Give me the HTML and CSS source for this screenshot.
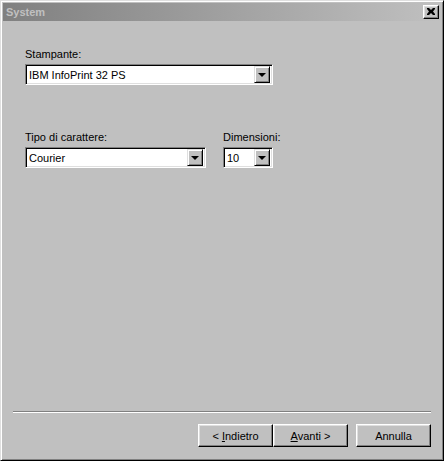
FILE: index.html
```html
<!DOCTYPE html>
<html lang="it">
<head>
  <meta charset="UTF-8" />
  <title>System</title>
  <link rel="stylesheet" href="styles.css">
</head>
<body>
  <div class="window">
    <div class="titlebar">
      <span class="title">System</span>
      <button class="close" title="Chiudi">
        <svg width="8" height="7" viewBox="0 0 8 7"><path d="M0 0h2l2 2 2-2h2v1l-2 2.5 2 2.5v1h-2l-2-2-2 2h-2v-1l2-2.5-2-2.5z" fill="#000"/></svg>
      </button>
    </div>

    <div class="main">
      <div class="field">
        <label>Stampante:</label>
        <div class="combo wide">
          <span class="value">IBM InfoPrint 32 PS</span>
          <span class="drop"><i class="arrow"></i></span>
        </div>
      </div>

      <div class="row">
        <div class="field">
          <label>Tipo di carattere:</label>
          <div class="combo font">
            <span class="value">Courier</span>
            <span class="drop"><i class="arrow"></i></span>
          </div>
        </div>
        <div class="field">
          <label>Dimensioni:</label>
          <div class="combo size">
            <span class="value">10</span>
            <span class="drop"><i class="arrow"></i></span>
          </div>
        </div>
      </div>
    </div>

    <div class="footer">
      <div class="separator"></div>
      <div class="buttons">
        <button class="btn">&lt; <u>I</u>ndietro</button>
        <button class="btn"><u>A</u>vanti &gt;</button>
        <button class="btn cancel">Annulla</button>
      </div>
    </div>
  </div>
</body>
</html>
```

FILE: styles.css
```css
body {
  margin: 0;
  background: #c0c0c0;
  font-family: "Liberation Sans", Arial, sans-serif;
  font-size: 11px;
  color: #000;
}
.window {
  width: 444px;
  height: 461px;
  box-sizing: border-box;
  background: #c0c0c0;
  border: 1px solid;
  border-color: #dfdfdf #000 #000 #dfdfdf;
  box-shadow: inset 1px 1px 0 #fff, inset -1px -1px 0 #808080;
  padding: 2px;
  display: flex;
  flex-direction: column;
}
.titlebar {
  height: 18px;
  background: linear-gradient(to right, #808080, #c0c0c0);
  display: flex;
  align-items: center;
  justify-content: space-between;
  padding: 0 2px 0 3px;
}
.title {
  color: #c0c0c0;
  font-weight: bold;
  font-size: 11px;
}
.close {
  width: 16px;
  height: 14px;
  padding: 0;
  margin: 0;
  background: #c0c0c0;
  border: 1px solid;
  border-color: #fff #000 #000 #fff;
  box-shadow: inset -1px -1px 0 #808080, inset 1px 1px 0 #dfdfdf;
  display: flex;
  align-items: center;
  justify-content: center;
}
.close svg {
  display: block;
  margin-top: -1px;
}
.main {
  flex: 1;
  padding: 27px 22px 0 22px;
}
.field label {
  display: block;
  line-height: 13px;
  margin-bottom: 3px;
}
.row {
  display: flex;
  gap: 17px;
  margin-top: 46px;
}
.combo {
  height: 21px;
  box-sizing: border-box;
  background: #fff;
  border: 1px solid;
  border-color: #808080 #fff #fff #808080;
  box-shadow: inset 1px 1px 0 #000, inset -1px -1px 0 #dfdfdf;
  padding: 2px;
  display: flex;
  align-items: center;
}
.combo.wide { width: 248px; }
.combo.font { width: 181px; }
.combo.size { width: 50px; }
.value {
  flex: 1;
  padding-left: 1px;
  white-space: nowrap;
  overflow: hidden;
}
.drop {
  width: 16px;
  height: 17px;
  box-sizing: border-box;
  background: #c0c0c0;
  border: 1px solid;
  border-color: #dfdfdf #000 #000 #dfdfdf;
  box-shadow: inset 1px 1px 0 #fff, inset -1px -1px 0 #808080;
  display: flex;
  align-items: center;
  justify-content: center;
}
.arrow {
  width: 0;
  height: 0;
  border-left: 4px solid transparent;
  border-right: 4px solid transparent;
  border-top: 4px solid #000;
  margin-left: -1px;
}
.footer {
  padding: 0 10px 11px 10px;
}
.separator {
  height: 0;
  border-top: 1px solid #808080;
  border-bottom: 1px solid #fff;
  margin-bottom: 11px;
}
.buttons {
  display: flex;
  justify-content: flex-end;
}
.btn {
  width: 75px;
  height: 23px;
  padding: 0;
  margin: 0;
  font-family: "Liberation Sans", Arial, sans-serif;
  font-size: 11px;
  color: #000;
  background: #c0c0c0;
  border: 1px solid;
  border-color: #fff #000 #000 #fff;
  box-shadow: inset -1px -1px 0 #808080, inset 1px 1px 0 #dfdfdf;
}
.btn.cancel {
  margin-left: 8px;
}
```
